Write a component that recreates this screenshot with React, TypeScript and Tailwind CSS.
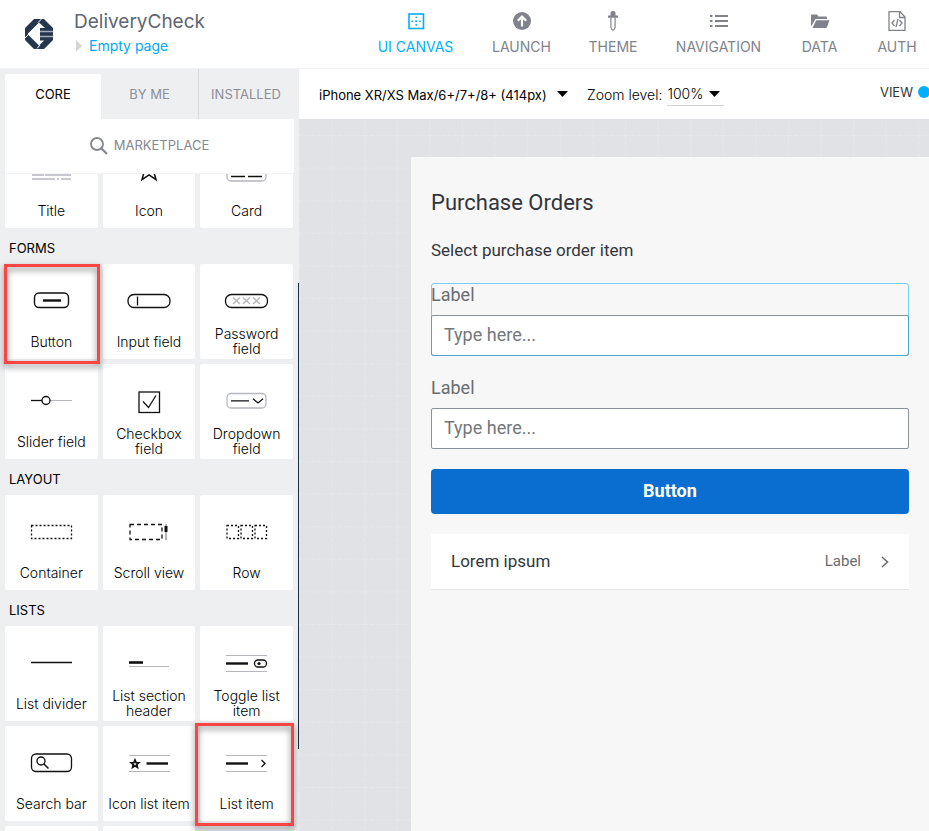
import React from "react";

type Tile = { label: string; art: React.ReactNode; mark?: string };

const GRAY = "#b5b7bd";

const star = (cx: number, cy: number, r: number, inner: number) =>
  Array.from({ length: 10 }, (_, i) => {
    const a = (Math.PI / 5) * i - Math.PI / 2;
    const d = i % 2 ? inner : r;
    return `${(cx + d * Math.cos(a)).toFixed(2)},${(cy + d * Math.sin(a)).toFixed(2)}`;
  }).join(" ");

const rails = (
  <path d="M26 29.5H67M26 45.5H67" stroke={GRAY} />
);

const top: Tile[] = [
  { label: "Title", art: <path d="M27 42H39M40 42H66M27 46H50M52 46H54M56 46H66" stroke={GRAY} strokeWidth="1.5" /> },
  { label: "Icon", art: <polygon points={star(46, 37, 12, 5)} strokeWidth="1.5" /> },
  {
    label: "Card",
    art: (
      <>
        <rect x="27" y="18.5" width="39" height="29.5" rx="4" stroke={GRAY} strokeWidth="1.3" />
        <path d="M31 43.5H45M48 43.5H62" strokeWidth="1.5" />
      </>
    ),
  },
];

const forms: Tile[] = [
  {
    label: "Button",
    mark: "-left-px -right-[2px] top-0 -bottom-[5px]",
    art: (
      <>
        <rect x="29.5" y="29" width="34" height="14.5" rx="4.5" strokeWidth="1.4" />
        <path d="M38 36.5H56" strokeWidth="2.4" />
      </>
    ),
  },
  {
    label: "Input field",
    art: (
      <>
        <rect x="25" y="30.5" width="42" height="13" rx="6" strokeWidth="1.3" />
        <path d="M34.5 32.5V41.5" strokeWidth="1.3" />
      </>
    ),
  },
  {
    label: "Password field",
    art: (
      <>
        <rect x="25.5" y="30.5" width="42" height="13" rx="6" strokeWidth="1.3" />
        <path
          d="M33 33.5l7 6.5m0-6.5l-7 6.5M43 33.5l7 6.5m0-6.5l-7 6.5M53 33.5l7 6.5m0-6.5l-7 6.5"
          stroke={GRAY}
          strokeWidth="1.4"
        />
      </>
    ),
  },
  {
    label: "Slider field",
    art: (
      <>
        <path d="M45 36.5H67" stroke={GRAY} />
        <path d="M26 36.5H37" strokeWidth="1.3" />
        <circle cx="41" cy="36.5" r="4" strokeWidth="1.4" />
      </>
    ),
  },
  {
    label: "Checkbox field",
    art: (
      <>
        <rect x="36" y="28" width="20.5" height="20.5" strokeWidth="1.3" />
        <path d="M40 37.5L45.5 43.5L53 31.5" strokeWidth="1.3" />
      </>
    ),
  },
  {
    label: "Dropdown field",
    art: (
      <>
        <rect x="27" y="29.5" width="39" height="14.5" rx="4" stroke={GRAY} strokeWidth="1.3" />
        <path d="M31 36.8H49M53 34.8L58 39L63 34.8" strokeWidth="1.3" />
      </>
    ),
  },
];

const layout: Tile[] = [
  {
    label: "Container",
    art: <rect x="26.5" y="30.5" width="40" height="13" strokeWidth="1.3" strokeDasharray="2 2" />,
  },
  {
    label: "Scroll view",
    art: (
      <>
        <rect x="27" y="29.5" width="32" height="15" strokeWidth="1.3" strokeDasharray="4 3" />
        <path d="M63 29V45" stroke={GRAY} strokeWidth="2" />
        <path d="M63 31V37" strokeWidth="3" />
      </>
    ),
  },
  {
    label: "Row",
    art: (
      <path
        d="M27 30.5H38.5V43.5H27ZM41 30.5H52.5V43.5H41ZM55 30.5H66.5V43.5H55Z"
        strokeWidth="1.3"
        strokeDasharray="2 2"
      />
    ),
  },
];

const lists: Tile[] = [
  { label: "List divider", art: <path d="M26 36.5H67" strokeWidth="1.3" /> },
  {
    label: "List section header",
    art: (
      <>
        <path d="M26 36.5H40" strokeWidth="2.6" />
        <path d="M26 40.5H66" stroke={GRAY} />
      </>
    ),
  },
  {
    label: "Toggle list item",
    art: (
      <>
        {rails}
        <path d="M26 37.5H48" strokeWidth="2.4" />
        <rect x="54.5" y="34" width="12" height="7" rx="3.5" strokeWidth="1.3" />
        <circle cx="59" cy="37.5" r="1.6" fill="#111" stroke="none" />
      </>
    ),
  },
  {
    label: "Search bar",
    art: (
      <>
        <rect x="26.5" y="28" width="40" height="17.5" rx="4.5" strokeWidth="1.3" />
        <circle cx="36" cy="35" r="4" strokeWidth="1.3" />
        <path d="M39 38L43.5 42.5" strokeWidth="1.5" />
      </>
    ),
  },
  {
    label: "Icon list item",
    art: (
      <>
        {rails}
        <polygon points={star(32, 38, 4, 1.8)} strokeWidth="1.8" />
        <path d="M43.5 37.5H65" strokeWidth="2.4" />
      </>
    ),
  },
  {
    label: "List item",
    mark: "-left-[5px] -right-px -top-[3px] -bottom-[5px]",
    art: (
      <>
        {rails}
        <path d="M26 37.5H48" strokeWidth="2.4" />
        <path d="M61.5 34L65 37.5L61.5 41" strokeWidth="1.3" />
      </>
    ),
  },
];

function TileGrid({ tiles }: { tiles: Tile[] }) {
  return (
    <div className="grid grid-cols-3 gap-[5px]">
      {tiles.map((t) => (
        <button key={t.label} type="button" className="relative flex h-[95px] flex-col items-center rounded-[2px] bg-white">
          <svg viewBox="0 0 93 63" className="h-[63px] w-[93px] shrink-0" fill="none" stroke="#111" aria-hidden="true">
            {t.art}
          </svg>
          <span className="flex h-7 items-center text-center text-sm leading-[15px] font-light text-black">
            {t.label}
          </span>
          {t.mark && (
            <span
              className={`pointer-events-none absolute z-10 border-3 border-[#fb4444] drop-shadow-[0_3px_3px_rgba(0,0,0,0.5)] ${t.mark}`}
            />
          )}
        </button>
      ))}
    </div>
  );
}

function Section({ title, tiles }: { title: string; tiles: Tile[] }) {
  return (
    <section>
      <h2 className="flex h-9 items-center pt-[6px] pl-1 text-[13px] text-black">{title}</h2>
      <TileGrid tiles={tiles} />
    </section>
  );
}

const nav = [
  {
    label: "UI CANVAS",
    width: "w-[75px]",
    icon: (
      <>
        <rect x="3" y="3" width="14.5" height="14.5" stroke="currentColor" strokeWidth="1.6" fill="none" />
        <path d="M10.2 5.5v9.5M5.5 10.2h9.5" stroke="currentColor" strokeWidth="1.5" strokeDasharray="1.6 2.2" fill="none" />
      </>
    ),
  },
  {
    label: "LAUNCH",
    width: "w-[57px]",
    icon: (
      <>
        <circle cx="10" cy="10" r="9" />
        <path d="M10 15.5V6M5.8 9.8L10 5.6L14.2 9.8" stroke="#fff" strokeWidth="2.2" fill="none" />
      </>
    ),
  },
  {
    label: "THEME",
    width: "w-[46px]",
    icon: (
      <>
        <path d="M7.5 4.5V1.8Q7.5 0 10 0T12.5 1.8V4.5H15V6.8H5V4.5Z" />
        <path d="M7.9 6.5V16.5Q10 22 12.1 16.5V6.5" fill="none" stroke="currentColor" strokeWidth="1.2" />
      </>
    ),
  },
  {
    label: "NAVIGATION",
    width: "w-[85px]",
    icon: (
      <path
        d="M1 5h2.5M6 5h13M1 10h2.5M6 10h13M1 15h2.5M6 15h13"
        stroke="currentColor"
        strokeWidth="2.2"
        fill="none"
      />
    ),
  },
  {
    label: "DATA",
    width: "w-[37px]",
    icon: (
      <path d="M1 15.5V4.5Q1 3.5 2 3.5H7L8.5 5.5H16Q17 5.5 17 6.5V8H5.5ZM6.2 9.2H19.5L17 16Q16.7 17 15.7 17H2.5Z" />
    ),
  },
  {
    label: "AUTH",
    width: "w-[38px]",
    icon: (
      <path
        d="M2 .7H13L18 6V19.3H2ZM12.5 .7V6.5H18M7.5 9L5 12L7.5 15M12.5 9L15 12L12.5 15M11 8L9 16"
        stroke="currentColor"
        strokeWidth="1.3"
        fill="none"
      />
    ),
  },
];

function Caret() {
  return (
    <svg viewBox="0 0 11 6" className="h-[6px] w-[11px] shrink-0" aria-hidden="true">
      <path d="M0 0H11L5.5 6Z" />
    </svg>
  );
}

function Field({ id, selected }: { id: string; selected?: boolean }) {
  return (
    <div className="relative">
      <label htmlFor={id} className="block h-8 text-lg leading-6 text-[#6a6d70]">
        Label
      </label>
      <input
        id={id}
        placeholder="Type here..."
        className="block h-[41px] w-full rounded-[2px] border border-[#89919a] bg-white px-3 pb-[2px] text-lg outline-none placeholder:text-[#74777a]"
      />
      {selected && (
        <span className="pointer-events-none absolute inset-0 rounded-[3px] border border-[#1eb4ff]/60" />
      )}
    </div>
  );
}

export default function App() {
  return (
    <div className="flex h-screen flex-col overflow-hidden bg-white font-['Inter',sans-serif]">
      <header className="flex h-[69px] shrink-0 items-center justify-between border-b border-[#f2f2f4] pr-[13px] pl-[25px]">
        <div className="flex items-center">
          <svg viewBox="0 0 28 30" className="h-[30px] w-[28px]" aria-hidden="true">
            <path d="M9 0H19L28 9V13L26 15L28 17V21L19 30H9L0 21V9Z" fill="#25374d" />
            <path d="M14 3.5L2.5 15L14 26.5L20 20.5L26 15L25.5 14Z" fill="#fff" />
            <path d="M15 9H28V20L26 21.5H15Z" fill="#25374d" />
            <path d="M0 19L3.5 15.5M13 3.5L16.5 0M12 29.5L15 26" stroke="#fff" />
            <path d="M15 12.5H28M15 17.5H28" stroke="#a3adb8" strokeWidth="1.3" />
          </svg>
          <div className="ml-[21px]">
            <h1 className="text-[19px] leading-6 text-[#5f6673]">DeliveryCheck</h1>
            <a href="#page" className="flex items-center text-sm leading-6 text-[#00a8f8]">
              <svg viewBox="0 0 6 12" className="mr-[7px] ml-[2px] h-3 w-[6px]" aria-hidden="true">
                <path d="M0 0L6 6L0 12Z" fill="#d3d5d9" />
              </svg>
              Empty page
            </a>
          </div>
        </div>
        <nav className="flex gap-10">
          {nav.map((n, i) => (
            <a
              key={n.label}
              href="#nav"
              className={`flex flex-col items-center gap-[6px] text-sm leading-5 whitespace-nowrap ${n.width} ${
                i === 0 ? "text-[#00b0ff]" : "text-[#80838c]"
              }`}
            >
              <svg viewBox="0 0 20 20" className="h-5 w-5" fill="currentColor" aria-hidden="true">
                {n.icon}
              </svg>
              {n.label}
            </a>
          ))}
        </nav>
      </header>

      <div className="flex min-h-0 flex-1">
        <aside className="relative flex w-[299px] shrink-0 flex-col bg-[#eeeff1] pt-[5px]">
          <div className="ml-[5px] flex h-[45px] shrink-0 text-[13px] text-[#8b8e97]">
            <button type="button" className="w-24 rounded-t-[2px] bg-white pb-1 text-black">
              CORE
            </button>
            <button type="button" className="flex-1 pb-1">
              BY ME
            </button>
            <button type="button" className="-mt-[5px] w-[101px] border-l border-[#d5d7da] pr-[6px] pb-1 pt-[5px]">
              INSTALLED
            </button>
          </div>
          <button
            type="button"
            className="mx-[5px] flex h-[55px] shrink-0 items-center justify-center gap-[6px] border-b border-[#f2f3f4] bg-white text-[13px] text-[#85888f]"
          >
            <svg viewBox="0 0 18 18" className="h-[18px] w-[18px]" fill="none" stroke="#85888f" aria-hidden="true">
              <circle cx="7" cy="7" r="6" strokeWidth="1.9" />
              <path d="M11 11L17 17" strokeWidth="2.3" />
            </svg>
            MARKETPLACE
          </button>
          <div className="min-h-0 flex-1 overflow-hidden pr-[6px] pl-[5px]">
            <div className="-mt-[41px] flex flex-col">
              <TileGrid tiles={top} />
              <Section title="FORMS" tiles={forms} />
              <Section title="LAYOUT" tiles={layout} />
              <Section title="LISTS" tiles={lists} />
              <div className="mt-[5px] grid grid-cols-3 gap-[5px]">
                <div className="h-[95px] rounded-[2px] bg-white" />
                <div className="h-[95px] rounded-[2px] bg-white" />
              </div>
            </div>
          </div>
          <span className="absolute top-[214px] right-0 h-[466px] w-px bg-[#1d2b3e]" />
        </aside>

        <div className="flex min-w-0 flex-1 flex-col">
          <div className="flex h-[50px] shrink-0 items-center pl-5 text-sm font-light text-black">
            <label className="flex w-[249px] items-center justify-between">
              <select aria-label="Device" className="appearance-none bg-transparent pt-[2px] text-[13px] font-normal">
                <option>iPhone XR/XS Max/6+/7+/8+ (414px)</option>
              </select>
              <Caret />
            </label>
            <label htmlFor="zoom" className="ml-[19px] pt-[2px]">
              Zoom level:
            </label>
            <div className="ml-[5px] flex h-6 items-center gap-[6px] border-b border-[#d3d4d7] pr-1">
              <select id="zoom" className="appearance-none bg-transparent">
                <option>100%</option>
              </select>
              <Caret />
            </div>
            <button type="button" className="ml-auto flex items-center gap-[5px] overflow-hidden pb-1 text-[13px] font-normal text-[#30333a]">
              VIEW
              <span className="-mr-px h-3 w-3 rounded-full bg-[#00b0ff]" />
            </button>
          </div>

          <div className="relative flex min-h-0 flex-1 bg-[#e1e2e6] pt-[38px] pl-28">
            <svg className="absolute inset-0 h-full w-full" aria-hidden="true">
              <defs>
                <pattern id="grid" width="32.6" height="32.6" patternUnits="userSpaceOnUse" y="16">
                  <path d="M0.5 0V32.6M0 0.5H32.6" stroke="#e6e7ea" strokeDasharray="4 2" />
                </pattern>
              </defs>
              <rect width="100%" height="100%" fill="url(#grid)" />
            </svg>
            <main className="relative flex flex-1 flex-col gap-5 bg-[#f7f7f7] px-5 font-['Roboto',sans-serif]">
              <div className="flex flex-col gap-[18px] pt-[30px]">
                <h2 className="text-[22px] leading-8 text-[#32363a]">Purchase Orders</h2>
                <p className="text-[17px] leading-[26px] text-[#32363a]">Select purchase order item</p>
              </div>
              <Field id="field-1" selected />
              <Field id="field-2" />
              <button type="button" className="h-[45px] rounded-[4px] bg-[#0a6ed1] pb-[2px] text-lg font-bold text-white">
                Button
              </button>
              <a
                href="#item"
                className="flex h-14 items-center border-b border-[#e4e4e4] bg-white px-5 text-[17px] text-[#32363a]"
              >
                Lorem ipsum
                <span className="ml-auto text-[15px] text-[#6a6d70]">Label</span>
                <svg viewBox="0 0 8 12" className="ml-5 h-3 w-2" fill="none" stroke="#6a6d70" strokeWidth="1.6" aria-hidden="true">
                  <path d="M1 1L6.5 6L1 11" />
                </svg>
              </a>
            </main>
          </div>
        </div>
      </div>
    </div>
  );
}
